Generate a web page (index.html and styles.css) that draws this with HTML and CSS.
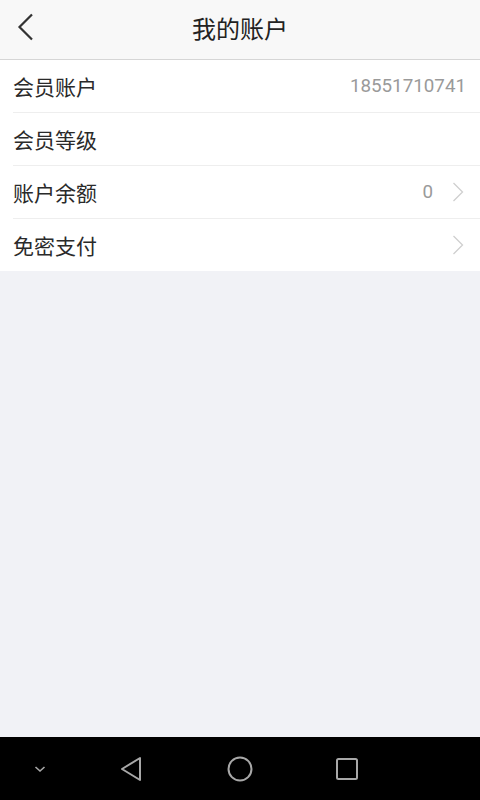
FILE: index.html
```html
<!DOCTYPE html>
<html lang="zh-CN">
<head>
<meta charset="utf-8">
<link rel="stylesheet" href="styles.css">
</head>
<body>
<div class="screen">
  <header class="topbar">
    <span class="back">
      <svg width="20" height="30" viewBox="0 0 20 30"><path d="M16 1.5 L3.5 14 L16 26.5" fill="none" stroke="#333" stroke-width="2.2"/></svg>
    </span>
    <h1 class="title">我的账户</h1>
  </header>
  <ul class="list">
    <li class="row"><span class="label">会员账户</span><span class="value">18551710741</span></li>
    <li class="row"><span class="label">会员等级</span></li>
    <li class="row"><span class="label">账户余额</span><span class="value">0</span><span class="arrow"><svg width="12" height="20" viewBox="0 0 12 20"><path d="M1.5 1 L10.5 10 L1.5 19" fill="none" stroke="#cfcfcf" stroke-width="1.3"/></svg></span></li>
    <li class="row"><span class="label">免密支付</span><span class="arrow"><svg width="12" height="20" viewBox="0 0 12 20"><path d="M1.5 1 L10.5 10 L1.5 19" fill="none" stroke="#cfcfcf" stroke-width="1.3"/></svg></span></li>
  </ul>
  <div class="fill"></div>
  <nav class="navbar">
    <span class="nav-item"><svg width="14" height="10" viewBox="0 0 14 10"><path d="M2.5 3 L7 7 L11.5 3" fill="none" stroke="#a8a8a8" stroke-width="1.6"/></svg></span>
    <span class="nav-item"><svg width="26" height="28" viewBox="0 0 26 28"><path d="M21 3 L21 25 L3 14 Z" fill="none" stroke="#a8a8a8" stroke-width="2" stroke-linejoin="round"/></svg></span>
    <span class="nav-item"><svg width="28" height="28" viewBox="0 0 28 28"><circle cx="14" cy="14" r="11.5" fill="none" stroke="#a8a8a8" stroke-width="2"/></svg></span>
    <span class="nav-item"><svg width="26" height="26" viewBox="0 0 26 26"><rect x="3" y="3" width="20" height="20" rx="1.5" fill="none" stroke="#a8a8a8" stroke-width="2"/></svg></span>
  </nav>
</div>
</body>
</html>
```

FILE: styles.css
```css
html, body {
  margin: 0;
  padding: 0;
}
body {
  font-family: "Noto Sans CJK SC", Roboto, sans-serif;
  background: #f1f2f6;
}
.screen {
  width: 480px;
  height: 800px;
  display: flex;
  flex-direction: column;
  background: #f1f2f6;
}
.topbar {
  height: 60px;
  box-sizing: border-box;
  padding-bottom: 4px;
  background: #f8f8f8;
  border-bottom: 1px solid #d6d6d6;
  position: relative;
  display: flex;
  align-items: center;
  justify-content: center;
  flex-shrink: 0;
}
.back {
  position: absolute;
  left: 16px;
  top: 13px;
  display: flex;
}
.title {
  margin: 0;
  font-size: 24px;
  font-weight: 400;
  color: #222;
  line-height: 1;
}
.list {
  list-style: none;
  margin: 0;
  padding: 0 0 0 13px;
  background: #fff;
  flex-shrink: 0;
}
.row {
  height: 52px;
  display: flex;
  align-items: center;
  padding-right: 14px;
  border-bottom: 1px solid #eeeeee;
}
.row:last-child {
  border-bottom: none;
}
.label {
  flex: 1;
  font-size: 21px;
  color: #2a2a2a;
  line-height: 1;
}
.value {
  font-family: Roboto, sans-serif;
  font-size: 18.8px;
  color: #9a9a9a;
  line-height: 1;
}
.arrow {
  display: flex;
  margin-left: 19px;
  margin-right: 2px;
}
.fill {
  flex: 1;
}
.navbar {
  height: 63px;
  background: #000;
  flex-shrink: 0;
  position: relative;
}
.nav-item {
  position: absolute;
  display: flex;
}
.nav-item:nth-child(1) { left: 33px; top: 27px; }
.nav-item:nth-child(2) { left: 119px; top: 18px; }
.nav-item:nth-child(3) { left: 226px; top: 18px; }
.nav-item:nth-child(4) { left: 334px; top: 19px; }
```
